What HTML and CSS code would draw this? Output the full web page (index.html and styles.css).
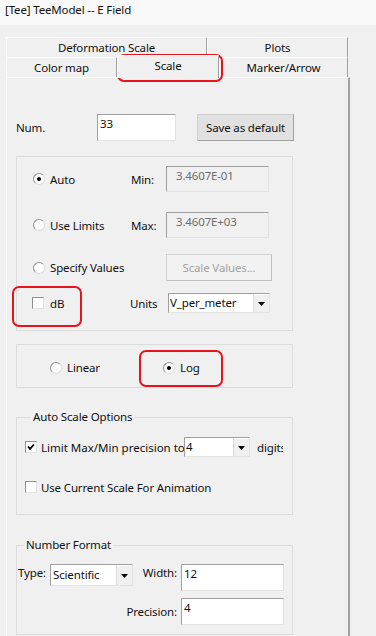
FILE: index.html
```html
<!DOCTYPE html>
<html>
<head>
<meta charset="utf-8">
<link rel="stylesheet" href="styles.css">
</head>
<body>
<div class="titlebar">[Tee] TeeModel -- E Field</div>
<div class="tabctl">
  <div class="tabrow">
    <div class="tab tab-def">Deformation Scale</div>
    <div class="tab tab-plots">Plots</div>
  </div>
  <div class="tabrow">
    <div class="tab tab-color">Color map</div>
    <div class="tab tab-scale sel">Scale</div>
    <div class="tab tab-marker">Marker/Arrow</div>
  </div>
  <div class="panel">
    <div class="numrow">
      <span class="num-lbl">Num.</span>
      <div class="edit num-edit">33</div>
      <div class="btn save-btn">Save as default</div>
    </div>

    <div class="group g-range">
      <div class="grow r-auto">
        <div class="opt"><span class="radio on"></span><span>Auto</span></div>
        <span class="rl">Min:</span>
        <div class="edit dis mm">3.4607E-01</div>
      </div>
      <div class="grow r-lim">
        <div class="opt"><span class="radio"></span><span>Use Limits</span></div>
        <span class="rl">Max:</span>
        <div class="edit dis mm">3.4607E+03</div>
      </div>
      <div class="grow r-spec">
        <div class="opt"><span class="radio"></span><span>Specify Values</span></div>
        <span class="rl"></span>
        <div class="btn dis-btn scalevals">Scale Values...</div>
      </div>
      <div class="grow r-db">
        <div class="opt opt-db"><span class="check"></span><span>dB</span></div>
        <span class="units-lbl">Units</span>
        <div class="select sel-units"><span class="val">V_per_meter</span><span class="arr"><svg width="7" height="4" viewBox="0 0 7 4"><polygon points="0,0 7,0 3.5,4" fill="#000"/></svg></span></div>
      </div>
    </div>

    <div class="group g-scale">
      <div class="opt2 opt-lin"><span class="radio"></span><span>Linear</span></div>
      <div class="opt2"><span class="radio on"></span><span>Log</span></div>
    </div>

    <fieldset class="fs fs-auto">
      <legend>Auto Scale Options</legend>
      <div class="crow crow1">
        <span class="check on"><svg width="10" height="10" viewBox="0 0 10 10"><polyline points="2,4.5 4,6.8 8,2.5" fill="none" stroke="#000" stroke-width="1.8"/></svg></span>
        <span class="clip-lbl">Limit Max/Min precision to</span>
        <div class="select sel-prec"><span class="val">4</span><span class="arr"><svg width="7" height="4" viewBox="0 0 7 4"><polygon points="0,0 7,0 3.5,4" fill="#000"/></svg></span></div>
        <span class="digits">digits</span>
      </div>
      <div class="crow crow2">
        <span class="check"></span>
        <span>Use Current Scale For Animation</span>
      </div>
    </fieldset>

    <fieldset class="fs fs-num">
      <legend>Number Format</legend>
      <div class="nfgrid">
        <span class="nf-lbl type-lbl">Type:</span>
        <div class="select sel-type"><span class="val">Scientific</span><span class="arr"><svg width="7" height="4" viewBox="0 0 7 4"><polygon points="0,0 7,0 3.5,4" fill="#000"/></svg></span></div>
        <span class="nf-lbl width-lbl">Width:</span>
        <div class="edit nf-edit">12</div>
        <span class="nf-lbl prec-lbl">Precision:</span>
        <div class="edit nf-edit">4</div>
      </div>
    </fieldset>
  </div>
</div>

<div class="mark mark-scale"></div>
<div class="mark mark-db"></div>
<div class="mark mark-log"></div>
</body>
</html>
```
FILE: styles.css
```css
* { box-sizing: border-box; }
html, body { margin: 0; padding: 0; }
body {
  width: 376px;
  height: 636px;
  overflow: hidden;
  background: #f0f0f0;
  font-family: "Noto Sans", "Open Sans", sans-serif;
  font-size: 11.5px;
  letter-spacing: -0.15px;
  color: #111;
  position: relative;
}

.titlebar {
  height: 25px;
  line-height: 20px;
  padding-left: 5px;
  background: #f9f9f9;
}

.tabctl { margin: 12px 0 0 6px; width: 344px; }
.tabrow { display: flex; height: 20px; }
.tab {
  height: 20px;
  line-height: 19px;
  text-align: center;
  white-space: nowrap;
  background: #f0f0f0;
  border-top: 1px solid #fdfdfd;
  border-left: 1px solid #fdfdfd;
  border-right: 1px solid #a0a0a0;
}
.tab-def { width: 201px; }
.tab-plots { width: 141px; }
.tab-color { width: 111px; }
.tab-scale { width: 102px; }
.tab-marker { width: 129px; }
.tab.sel {
  position: relative;
  z-index: 1;
  height: 23px;
  margin-top: -2px;
  line-height: 19px;
}

.panel {
  width: 344px;
  height: 560px;
  border-top: 1px solid #fdfdfd;
  border-left: 1px solid #fdfdfd;
  border-right: 2px solid #a0a0a0;
  padding: 36px 0 0 9px;
}

.numrow { display: flex; align-items: center; height: 27px; }
.num-lbl { width: 81px; }

.edit {
  background: #fff;
  border: 1px solid;
  border-color: #a0a0a0 #e3e3e3 #e3e3e3 #a0a0a0;
  padding: 1px 2px;
  line-height: 16px;
  white-space: nowrap;
}
.num-edit { width: 79px; height: 27px; }

.btn {
  display: flex;
  align-items: center;
  justify-content: center;
  background: #e1e1e1;
  border: 1px solid;
  border-color: #cfcfcf #a0a0a0 #a0a0a0 #cfcfcf;
  white-space: nowrap;
}
.save-btn { width: 97px; height: 27px; margin-left: 21px; }

.group { width: 277px; border: 1px solid #dcdcdc; }
.g-range { margin-top: 15px; height: 175px; padding: 9px 0 0 16px; }
.grow { display: flex; align-items: center; }
.r-auto, .r-lim { height: 26px; }
.r-lim { margin-top: 20px; }
.r-spec { height: 27px; margin-top: 16px; }
.r-db { height: 20px; margin-top: 12px; }

.opt { width: 98px; display: flex; align-items: center; gap: 5px; white-space: nowrap; }
.opt-db { margin-left: -1px; gap: 6px; }
.rl { width: 35px; }
.mm { width: 103px; height: 26px; padding-left: 9px; }
.edit.dis { background: #f0f0f0; color: #6d6d6d; }

.dis-btn {
  background: #f2f2f2;
  border-color: #d2d2d2 #bfbfbf #bfbfbf #d2d2d2;
  color: #a3a3a3;
}
.scalevals { width: 106px; height: 27px; }

.units-lbl { width: 38px; }

.select {
  display: flex;
  background: #fff;
  border: 1px solid;
  border-color: #a0a0a0 #e3e3e3 #e3e3e3 #a0a0a0;
  height: 20px;
}
.select .val { flex: 1; padding-left: 1px; line-height: 18px; white-space: nowrap; overflow: hidden; }
.select .arr {
  width: 16px;
  display: flex;
  align-items: center;
  justify-content: center;
  background: #f0f0f0;
  border-left: 1px solid #dadada;
  border-top: 1px solid #fff;
}
.sel-units { width: 102px; }

.radio {
  flex: none;
  width: 12px;
  height: 12px;
  border-radius: 50%;
  background: #fff;
  border: 1px solid;
  border-color: #8f8f8f #dcdcdc #dcdcdc #8f8f8f;
  display: inline-flex;
  align-items: center;
  justify-content: center;
}
.radio.on::after {
  content: "";
  width: 4px;
  height: 4px;
  border-radius: 50%;
  background: #000;
}

.check {
  flex: none;
  width: 12px;
  height: 12px;
  background: #fff;
  border: 1px solid;
  border-color: #8f8f8f #e3e3e3 #e3e3e3 #8f8f8f;
  display: inline-flex;
  align-items: center;
  justify-content: center;
}

.g-scale {
  margin-top: 13px;
  height: 44px;
  display: flex;
  align-items: center;
  padding: 3px 0 0 33px;
}
.opt2 { display: flex; align-items: center; gap: 5px; }
.opt-lin { width: 113px; }

.fs {
  width: 277px;
  margin: 0;
  padding: 0;
  min-width: 0;
  border: 1px solid #dcdcdc;
}
.fs legend { margin-left: 6px; padding: 0 2px; line-height: 16px; }
.fs-auto { margin-top: 21px; padding: 0 0 17px 8px; }
.crow { display: flex; align-items: center; height: 20px; }
.crow1 { margin-top: 12px; }
.crow2 { margin-top: 20px; gap: 4px; }
.crow1 .check { margin-right: 4px; }
.clip-lbl { width: 143px; overflow: hidden; white-space: nowrap; letter-spacing: 0; }
.sel-prec { width: 66px; }
.digits { margin-left: 7px; width: 26px; overflow: hidden; white-space: nowrap; }

.fs-num { margin-top: 22px; padding: 11px 0 9px 1px; }
.nfgrid {
  display: grid;
  grid-template-columns: 32px 83px 48px 103px;
  row-gap: 7px;
}
.nf-lbl { line-height: 18px; white-space: nowrap; }
.type-lbl, .width-lbl { align-self: start; }
.width-lbl { justify-self: end; padding-right: 4px; }
.prec-lbl { grid-column: 1 / 4; justify-self: end; padding-right: 4px; align-self: center; }
.sel-type { height: 22px; }
.sel-type .val { line-height: 20px; padding-left: 2px; }
.nf-edit { height: 27px; }

.mark {
  position: absolute;
  border: 2px solid #e8141c;
  border-radius: 7px;
}
.mark-scale { left: 117px; top: 54px; width: 106px; height: 28px; }
.mark-db { left: 12px; top: 286px; width: 70px; height: 41px; }
.mark-log { left: 139px; top: 350px; width: 84px; height: 37px; }
```
